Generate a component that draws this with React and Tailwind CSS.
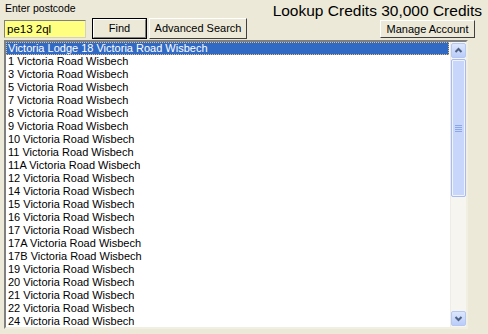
import React from "react";

const rows = [
  "Victoria Lodge 18 Victoria Road Wisbech",
  "1 Victoria Road Wisbech",
  "3 Victoria Road Wisbech",
  "5 Victoria Road Wisbech",
  "7 Victoria Road Wisbech",
  "8 Victoria Road Wisbech",
  "9 Victoria Road Wisbech",
  "10 Victoria Road Wisbech",
  "11 Victoria Road Wisbech",
  "11A Victoria Road Wisbech",
  "12 Victoria Road Wisbech",
  "14 Victoria Road Wisbech",
  "15 Victoria Road Wisbech",
  "16 Victoria Road Wisbech",
  "17 Victoria Road Wisbech",
  "17A Victoria Road Wisbech",
  "17B Victoria Road Wisbech",
  "19 Victoria Road Wisbech",
  "20 Victoria Road Wisbech",
  "21 Victoria Road Wisbech",
  "22 Victoria Road Wisbech",
  "24 Victoria Road Wisbech",
];

const ArrowBtn = ({ down }) => (
  <div className="w-[15px] h-[15px] rounded-[2px] border border-[#B5C8F3] bg-gradient-to-b from-[#DCE6FD] to-[#BACCF8] flex items-center justify-center">
    <svg width="9" height="9" viewBox="0 0 9 9">
      <path
        d={down ? "M1.5 3 L4.5 6 L7.5 3" : "M1.5 6 L4.5 3 L7.5 6"}
        fill="none"
        stroke="#4D6185"
        strokeWidth="2"
      />
    </svg>
  </div>
);

const App = () => {
  return (
    <div className="w-[488px] h-[334px] bg-[#ECE9D8] font-['Liberation_Sans',sans-serif] text-black overflow-hidden">
      <div className="flex justify-between h-[40px]">
        <div className="pl-[4px] pt-[1px]">
          <div className="text-[10.5px] leading-[14px] pl-[1px]">Enter postcode</div>
          <div className="flex items-center mt-[3px]">
            <div className="w-[82px] h-[18px] bg-[#FFFF80] border border-t-[#808080] border-l-[#808080] border-r-[#D4D0C8] border-b-[#D4D0C8] text-[11.5px] leading-[16px] pl-[2px]">
              pe13 2ql
            </div>
            <div className="ml-[6px] w-[55px] h-[21px] border border-black">
              <div className="w-full h-full border border-t-white border-l-white border-r-[#808080] border-b-[#808080] text-[11px] leading-[17px] text-center">
                Find
              </div>
            </div>
            <div className="ml-[2px] w-[98px] h-[21px] border border-t-white border-l-white border-r-[#404040] border-b-[#404040] text-[11px] leading-[19px] text-center">
              Advanced Search
            </div>
          </div>
        </div>
        <div className="flex flex-col items-end pr-[6px]">
          <div className="text-[15.5px] leading-[18px] pt-[2px]">Lookup Credits 30,000 Credits</div>
          <div className="mr-[7px] w-[95px] h-[18px] border border-t-white border-l-white border-r-[#404040] border-b-[#404040] text-[11px] leading-[16px] text-center">
            Manage Account
          </div>
        </div>
      </div>
      <div className="ml-[4px] w-[464px] h-[289px] bg-white border-2 border-t-[#808080] border-l-[#808080] border-r-[#F1EFE2] border-b-[#F1EFE2] flex">
        <div className="w-[444px] text-[11px]">
          {rows.map((r, i) => (
            <div
              key={r}
              className={
                i === 0
                  ? "h-[13px] leading-[11px] pl-[1px] bg-[#316AC5] text-white border border-dotted border-[#E8C070] whitespace-nowrap"
                  : "h-[13px] leading-[13px] pl-[2px] whitespace-nowrap"
              }
            >
              {r}
            </div>
          ))}
        </div>
        <div className="ml-[1px] w-[16px] h-full bg-[#F6F5EF] border-l border-[#EEEDE5] flex flex-col items-center pt-[1px] pb-[1px]">
          <ArrowBtn />
          <div className="mt-[1px] w-[15px] h-[138px] rounded-[2px] border border-[#A8BAF0] bg-[#C8D6FC] flex items-center justify-center">
            <div className="w-full h-full border border-white/70 rounded-[1px] flex items-center justify-center">
              <div className="flex flex-col gap-[1px]">
                <div className="w-[7px] h-[1px] bg-[#8CA6E8]" />
                <div className="w-[7px] h-[1px] bg-[#8CA6E8]" />
                <div className="w-[7px] h-[1px] bg-[#8CA6E8]" />
                <div className="w-[7px] h-[1px] bg-[#8CA6E8]" />
              </div>
            </div>
          </div>
          <div className="flex-1" />
          <ArrowBtn down />
        </div>
      </div>
    </div>
  );
};

export default App;
